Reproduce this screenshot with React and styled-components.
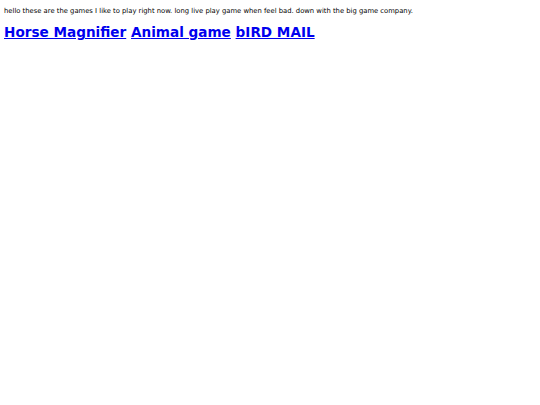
import React from "react";
import styled, { createGlobalStyle } from "styled-components";

const GlobalStyle = createGlobalStyle`
  body {
    margin: 4px;
    font-family: "DejaVu Sans", Verdana, sans-serif;
    background: #fff;
  }
`;

const Intro = styled.p`
  font-size: 6.8px;
  line-height: 9px;
  margin: 3px 0 0;
  color: #000;
`;

const GameList = styled.h2`
  font-size: 13.6px;
  line-height: 18px;
  font-weight: bold;
  margin: 7px 0 0;
`;

const GameLink = styled.a`
  color: #0000ee;
  text-decoration: underline;
`;

const games = ["Horse Magnifier", "Animal game", "bIRD MAIL"];

function App() {
  return (
    <>
      <GlobalStyle />
      <Intro>
        hello these are the games I like to play right now. long live play game
        when feel bad. down with the big game company.
      </Intro>
      <GameList>
        {games.map((name, i) => (
          <React.Fragment key={name}>
            <GameLink href="#">{name}</GameLink>
            {i < games.length - 1 ? " " : null}
          </React.Fragment>
        ))}
      </GameList>
    </>
  );
}

export default App;
